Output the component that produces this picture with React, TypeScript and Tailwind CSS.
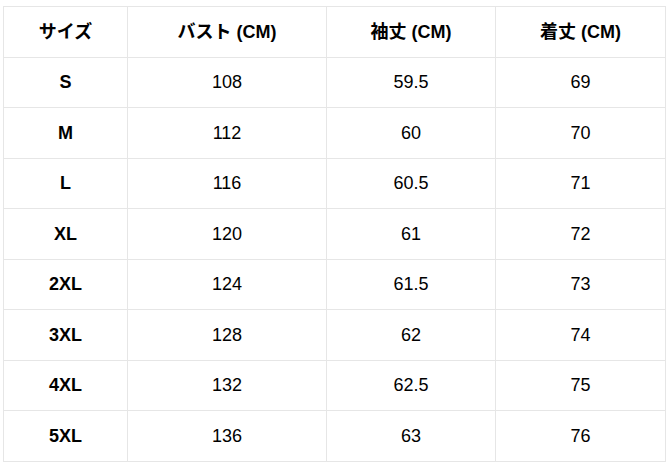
import React from "react";

const headers = ["サイズ", "バスト (CM)", "袖丈 (CM)", "着丈 (CM)"];
const rows = [
  ["S", "108", "59.5", "69"],
  ["M", "112", "60", "70"],
  ["L", "116", "60.5", "71"],
  ["XL", "120", "61", "72"],
  ["2XL", "124", "61.5", "73"],
  ["3XL", "128", "62", "74"],
  ["4XL", "132", "62.5", "75"],
  ["5XL", "136", "63", "76"],
];
const widths = ["w-[124px]", "w-[199px]", "w-[169px]", "w-[170px]"];

export default function App() {
  return (
    <div
      className="min-h-[468px] w-[671px] bg-white pl-[3px] pt-[6px] text-black"
      style={{ fontFamily: '"Liberation Sans", Arial, "Noto Sans CJK JP", sans-serif' }}
    >
      <div className="flex w-[663px] flex-col border-l border-t border-[#e6e6e6]">
        <div className="flex h-[51px]">
          {headers.map((h, i) => (
            <div
              key={i}
              className={`${widths[i]} flex items-center justify-center border-b border-r border-[#e6e6e6] text-[18px] font-bold`}
            >
              {h}
            </div>
          ))}
        </div>
        {rows.map((r, ri) => (
          <div key={ri} className={`flex ${ri % 2 === 0 ? "h-[50px]" : "h-[51px]"}`}>
            {r.map((c, ci) => (
              <div
                key={ci}
                className={`${widths[ci]} flex items-center justify-center border-b border-r border-[#e6e6e6] text-[18px] ${ci === 0 ? "font-bold" : ""}`}
              >
                {c}
              </div>
            ))}
          </div>
        ))}
      </div>
    </div>
  );
}
